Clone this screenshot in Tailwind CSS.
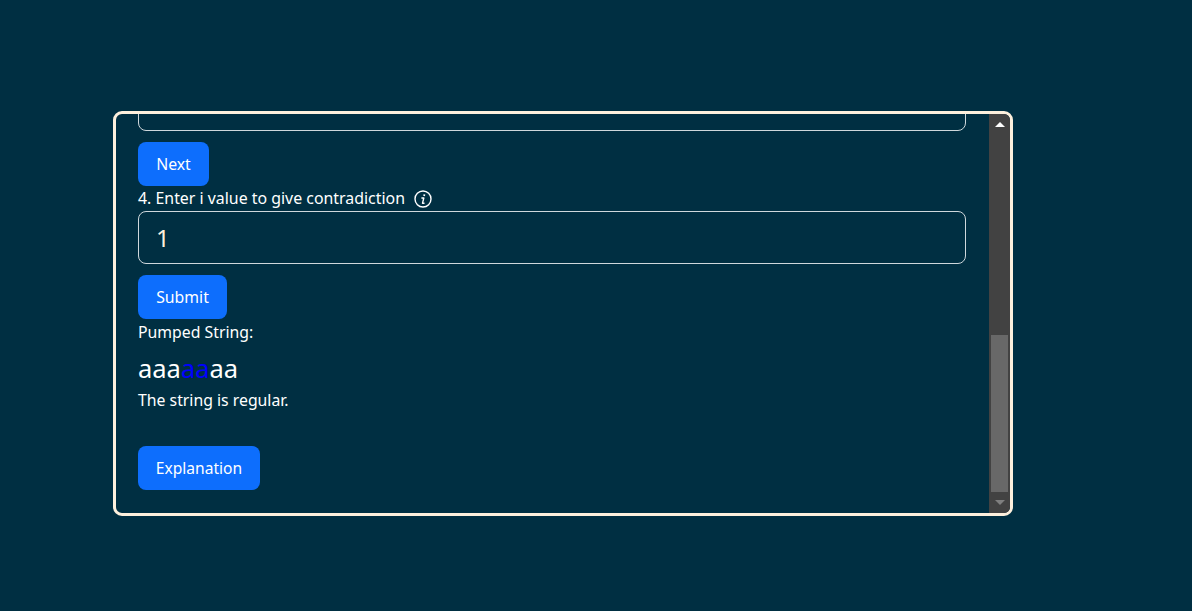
<!DOCTYPE html>
<html lang="en">
<head>
    <meta charset="UTF-8">
    <title>Pumping Lemma</title>
    <script src="https://cdn.jsdelivr.net/npm/@tailwindcss/browser@4"></script>
</head>
<body class="bg-[#002f42] h-[611px] overflow-hidden font-['Noto_Sans',sans-serif] text-white text-[15.8px]">
    <div class="pt-[111px] pl-[113px]">
        <div class="flex w-[900px] h-[405px] border-[3px] border-[#fdf0dd] rounded-[9px] overflow-hidden">
            <!-- scrolled content, top input is cut off -->
            <div class="flex-1 min-w-0 pl-[22px] pr-[23px] overflow-hidden">
                <div class="h-[53px] -mt-[36px] border border-[#cfd8dc] rounded-lg"></div>
                <button class="block h-[44px] w-[71px] mt-[11px] pt-[2px] bg-[#0d6efd] rounded-lg text-center">Next</button>
                <div class="flex items-center h-[25px] pt-[1px] text-[15.9px]">
                    <span>4. Enter i value to give contradiction</span>
                    <svg class="ml-[9px] w-[18px] h-[18px]" viewBox="0 0 18 18" fill="none" stroke="currentColor">
                        <circle cx="9" cy="9" r="8" stroke-width="1.4"/>
                        <path d="M10.4 4.4l-.3 1.6" stroke-width="1.8"/>
                        <path d="M7.4 8h2.4l-1.3 5.2h2" stroke-width="1.4" stroke-linejoin="round"/>
                    </svg>
                </div>
                <div class="flex items-center h-[53px] pl-[17px] border border-[#cfd8dc] rounded-lg text-[24px] text-[#fdf0dd]">1</div>
                <button class="block h-[44px] w-[89px] mt-[11px] pt-[2px] bg-[#0d6efd] rounded-lg text-center">Submit</button>
                <p class="h-[25px] pt-[1px] leading-[25px]">Pumped String:</p>
                <p class="h-[47px] pt-[4px] leading-[40px] text-[25.5px]">aaa<span class="text-[#0000ff]">aa</span>aa</p>
                <p class="h-[25px] pt-[2px] leading-[15px]">The string is regular.</p>
                <button class="block h-[44px] w-[122px] mt-[30px] pt-[1px] bg-[#0d6efd] rounded-lg text-center text-[15.6px]">Explanation</button>
            </div>
            <!-- scrollbar -->
            <div class="flex flex-col items-center w-[21px] shrink-0 bg-[#424242]">
                <div class="flex justify-center items-center h-[21px] shrink-0">
                    <div class="w-0 h-0 border-x-[5px] border-x-transparent border-b-[5px] border-b-white"></div>
                </div>
                <div class="flex-1 w-[17px] flex flex-col justify-end">
                    <div class="h-[157px] bg-[#686868]"></div>
                </div>
                <div class="flex justify-center items-center h-[21px] shrink-0">
                    <div class="w-0 h-0 border-x-[5px] border-x-transparent border-t-[5px] border-t-[#7f7f7f]"></div>
                </div>
            </div>
        </div>
    </div>
</body>
</html>
